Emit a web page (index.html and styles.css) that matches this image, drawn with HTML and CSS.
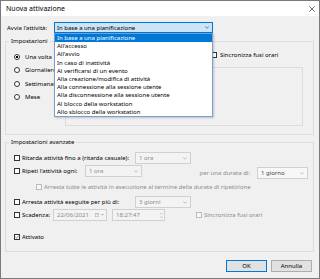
FILE: index.html
```html
<!DOCTYPE html>
<html lang="it">
<head>
  <meta charset="UTF-8" />
  <title>Nuova attivazione</title>
  <link rel="stylesheet" href="styles.css">
</head>
<body>
  <div class="window">
    <div class="titlebar">
      <span class="title">Nuova attivazione</span>
      <svg class="close" width="6" height="6" viewBox="0 0 6 6"><path d="M0.3 0.3L5.7 5.7M5.7 0.3L0.3 5.7" stroke="#333" stroke-width="0.7" fill="none"/></svg>
    </div>
    <div class="content">
      <div class="start-row">
        <span class="start-label">Avvia l'attività:</span>
        <div class="combo">
          <span>In base a una pianificazione</span>
          <svg class="chev" width="4" height="3" viewBox="0 0 4 3"><path d="M0.3 0.6L2 2.2L3.7 0.6" stroke="#333" stroke-width="0.6" fill="none"/></svg>
          <ul class="droplist">
            <li class="selected">In base a una pianificazione</li>
            <li>All'accesso</li>
            <li>All'avvio</li>
            <li>In caso di inattività</li>
            <li>Al verificarsi di un evento</li>
            <li>Alla creazione/modifica di attività</li>
            <li>Alla connessione alla sessione utente</li>
            <li>Alla disconnessione alla sessione utente</li>
            <li>Al blocco della workstation</li>
            <li>Allo sblocco della workstation</li>
          </ul>
        </div>
      </div>

      <fieldset class="group settings">
        <legend>Impostazioni</legend>
        <div class="settings-body">
          <div class="radios">
            <div class="radio-row"><span class="radio checked"></span>Una volta</div>
            <div class="radio-row"><span class="radio"></span>Giornaliero</div>
            <div class="radio-row"><span class="radio"></span>Settimanale</div>
            <div class="radio-row"><span class="radio"></span>Mese</div>
          </div>
          <div class="settings-right">
            <div class="start-time">
              <span class="check"></span>Sincronizza fusi orari
            </div>
            <div class="recurrence"></div>
          </div>
        </div>
      </fieldset>

      <fieldset class="group advanced">
        <legend>Impostazioni avanzate</legend>
        <div class="advanced-body">
          <div class="row">
            <span class="check"></span>
            <span class="lbl-wide">Ritarda attività fino a (ritarda casuale):</span>
            <span class="select sel-short">1 ora<svg class="chev" width="4" height="3" viewBox="0 0 4 3"><path d="M0.3 0.6L2 2.2L3.7 0.6" stroke="#9a9a9a" stroke-width="0.6" fill="none"/></svg></span>
          </div>
          <div class="row row-split">
            <div class="part">
              <span class="check"></span>
              <span class="lbl-repeat">Ripeti l'attività ogni:</span>
              <span class="select sel-repeat">1 ora<svg class="chev" width="4" height="3" viewBox="0 0 4 3"><path d="M0.3 0.6L2 2.2L3.7 0.6" stroke="#9a9a9a" stroke-width="0.6" fill="none"/></svg></span>
            </div>
            <div class="part part-right">
              <span class="muted">per una durata di:</span>
              <span class="select sel-duration">1 giorno<svg class="chev" width="4" height="3" viewBox="0 0 4 3"><path d="M0.3 0.6L2 2.2L3.7 0.6" stroke="#9a9a9a" stroke-width="0.6" fill="none"/></svg></span>
            </div>
          </div>
          <div class="row row-sub">
            <span class="check disabled"></span>
            <span class="muted">Arresta tutte le attività in esecuzione al termine della durata di ripetizione</span>
          </div>
          <div class="row row-stop">
            <span class="check"></span>
            <span class="lbl-wide">Arresta attività eseguite per più di:</span>
            <span class="select sel-short">3 giorni<svg class="chev" width="4" height="3" viewBox="0 0 4 3"><path d="M0.3 0.6L2 2.2L3.7 0.6" stroke="#9a9a9a" stroke-width="0.6" fill="none"/></svg></span>
          </div>
          <div class="row row-expire">
            <span class="check"></span>
            <span class="lbl-expire">Scadenza:</span>
            <span class="field date">22/06/2021
              <span class="date-icons">
                <svg width="4" height="4" viewBox="0 0 4 4"><rect x="0.3" y="0.3" width="3.4" height="3.4" fill="none" stroke="#b5b5b5" stroke-width="0.6"/><path d="M0.3 1.2H3.7" stroke="#b5b5b5" stroke-width="0.6"/></svg>
                <svg width="3" height="2" viewBox="0 0 3 2"><path d="M0 0H3L1.5 1.6Z" fill="#b0b0b0"/></svg>
              </span>
            </span>
            <span class="field time">18:27:47
              <svg width="3" height="7" viewBox="0 0 3 7"><path d="M0.2 2.6L1.5 1L2.8 2.6M0.2 4.4L1.5 6L2.8 4.4" stroke="#a0a0a0" stroke-width="0.5" fill="none"/></svg>
            </span>
            <span class="check disabled sync"></span>
            <span class="muted">Sincronizza fusi orari</span>
          </div>
          <div class="row row-enabled">
            <span class="check"><svg width="4" height="4" viewBox="0 0 4 4"><path d="M0.3 2L1.5 3.2L3.7 0.6" stroke="#333" stroke-width="0.6" fill="none"/></svg></span>
            <span>Attivato</span>
          </div>
        </div>
      </fieldset>

      <div class="buttons">
        <button class="btn default">OK</button>
        <button class="btn">Annulla</button>
      </div>
    </div>
  </div>
</body>
</html>
```

FILE: styles.css
```css
body {
  margin: 0;
  font-family: "Noto Sans", sans-serif;
  font-size: 6px;
  color: #000;
}
.window {
  width: 320px;
  height: 279px;
  box-sizing: border-box;
  border: 1px solid #7a7a7a;
  background: #f0f0f0;
}
.titlebar {
  height: 15px;
  background: #fff;
  display: flex;
  align-items: center;
  justify-content: space-between;
  padding: 0 4px 0 5px;
  font-size: 7px;
}
.content {
  padding: 6px 5px 0 4px;
}
.start-row {
  display: flex;
  align-items: center;
  height: 11px;
  padding-left: 2px;
}
.start-label {
  width: 47px;
}
.combo {
  position: relative;
  width: 159px;
  height: 11px;
  box-sizing: border-box;
  border: 1px solid #0078d7;
  background: #cce4f7;
  display: flex;
  align-items: center;
  justify-content: space-between;
  padding: 0 3px 0 2px;
}
.chev {
  flex: none;
}
.droplist {
  position: absolute;
  z-index: 10;
  top: calc(100% + 1px);
  left: -1px;
  width: 159px;
  box-sizing: border-box;
  margin: 0;
  padding: 0;
  list-style: none;
  background: #fff;
  border: 1px solid #7a9fcf;
  box-shadow: 1px 1px 2px rgba(0,0,0,0.2);
}
.droplist li {
  line-height: 8.2px;
  height: 8.2px;
  padding-left: 2px;
  white-space: nowrap;
}
.droplist li.selected {
  background: #0078d7;
  color: #fff;
}

.group {
  margin: 0;
  padding: 0;
  min-width: 0;
  border: 1px solid #dcdcdc;
}
.group legend {
  padding: 0 2px;
  margin-left: 3px;
  line-height: 9px;
}
.settings {
  margin-top: 4px;
}
.settings-body {
  display: flex;
  padding: 0 0 8px 8px;
}
.radios {
  width: 51px;
  padding-top: 4px;
}
.radio-row {
  height: 13.5px;
  display: flex;
  align-items: center;
  gap: 5px;
  white-space: nowrap;
}
.radio {
  flex: none;
  width: 6px;
  height: 6px;
  box-sizing: border-box;
  border: 1px solid #333;
  border-radius: 50%;
  background: #fff;
}
.radio.checked {
  background: radial-gradient(circle, #000 1.1px, #fff 1.5px);
}
.settings-right {
  width: 238px;
  padding-top: 3px;
}
.start-time {
  display: flex;
  align-items: center;
  height: 11px;
  padding-left: 146px;
  white-space: nowrap;
}
.start-time .check {
  margin-right: 3px;
}
.recurrence {
  margin-top: 7px;
  height: 59px;
  box-sizing: border-box;
  border: 1px solid #dcdcdc;
}

.advanced {
  margin-top: 3px;
}
.advanced-body {
  display: flex;
  flex-direction: column;
  padding: 5px 0 9px 8px;
}
.row {
  display: flex;
  align-items: center;
  height: 12px;
  white-space: nowrap;
}
.check {
  flex: none;
  width: 6px;
  height: 6px;
  box-sizing: border-box;
  border: 1px solid #333;
  background: #fff;
  margin-right: 2px;
  display: flex;
  align-items: center;
  justify-content: center;
}
.check.disabled {
  border-color: #bcbcbc;
  background: #f7f7f7;
}
.muted {
  color: #8c8c8c;
}
.lbl-wide {
  width: 113px;
}
.select, .field {
  height: 12px;
  box-sizing: border-box;
  border: 1px solid #d0d0d0;
  background: #f3f3f3;
  color: #8c8c8c;
  display: flex;
  align-items: center;
  justify-content: space-between;
  padding: 0 3px;
}
.sel-short {
  width: 56px;
}
.row-split {
  height: 14px;
  align-items: flex-start;
  margin-top: 1px;
}
.part {
  display: flex;
  align-items: center;
  height: 12px;
}
.part-right {
  margin-left: auto;
  margin-right: 5px;
  margin-top: 2px;
}
.lbl-repeat {
  width: 63px;
}
.sel-repeat {
  width: 57px;
}
.sel-duration {
  width: 51px;
  margin-left: 7px;
  color: #444;
  background: #f7f7f7;
}
.row-sub {
  height: 10px;
  margin-top: 3px;
  padding-left: 22px;
}
.row-stop {
  margin-top: 4px;
}
.row-expire {
  margin-top: 1px;
}
.lbl-expire {
  width: 31px;
}
.date {
  width: 54px;
  padding-right: 2px;
}
.date-icons {
  display: flex;
  align-items: center;
  gap: 2px;
}
.time {
  width: 53px;
  margin-left: 5px;
  padding-right: 1px;
}
.check.sync {
  margin-left: 31px;
}
.row-enabled {
  height: 10px;
  margin-top: 11px;
}

.buttons {
  display: flex;
  justify-content: flex-end;
  gap: 4px;
  margin-top: 8px;
  padding-right: 2px;
}
.btn {
  width: 41px;
  height: 12px;
  padding: 0;
  font: inherit;
  color: #000;
  background: #e1e1e1;
  border: 1px solid #adadad;
}
.btn.default {
  border-color: #0078d7;
}
```
